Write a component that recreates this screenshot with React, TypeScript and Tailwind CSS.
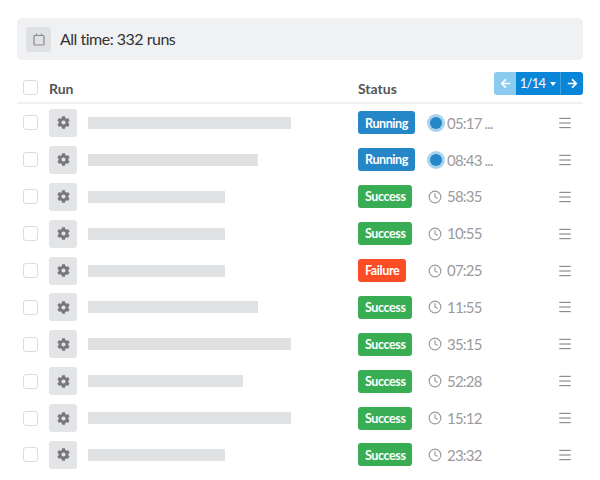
import React from "react";
import { Clock, Menu } from "lucide-react";
import { FaArrowLeft, FaArrowRight, FaCog } from "react-icons/fa";

type RunRow = {
  width: string;
  status: "Running" | "Success" | "Failure";
  time: string;
};

const rows: RunRow[] = [
  { width: "w-[203px]", status: "Running", time: "05:17 ..." },
  { width: "w-[170px]", status: "Running", time: "08:43 ..." },
  { width: "w-[137px]", status: "Success", time: "58:35" },
  { width: "w-[137px]", status: "Success", time: "10:55" },
  { width: "w-[137px]", status: "Failure", time: "07:25" },
  { width: "w-[170px]", status: "Success", time: "11:55" },
  { width: "w-[203px]", status: "Success", time: "35:15" },
  { width: "w-[155px]", status: "Success", time: "52:28" },
  { width: "w-[203px]", status: "Success", time: "15:12" },
  { width: "w-[137px]", status: "Success", time: "23:32" },
];

const badgeColor = {
  Running: "bg-[#2687c8]",
  Success: "bg-[#38ad53]",
  Failure: "bg-[#fa4c25]",
};

const Checkbox = () => (
  <div className="w-[15px] h-[15px] rounded-[3px] border border-[#dcdcdc] bg-white shrink-0" />
);

const Row = ({ row }: { row: RunRow }) => (
  <div className="h-[36.9px] flex items-center">
    <div className="w-[32px] pl-[6px]">
      <Checkbox />
    </div>
    <div className="w-[28px] h-[28px] rounded-[3px] bg-[#e3e4e6] flex items-center justify-center text-[#77787a] shrink-0">
      <FaCog size={13} />
    </div>
    <div className="w-[281px] pl-[10.5px]">
      <div className={`${row.width} h-[12px] bg-[#e0e1e2]`} />
    </div>
    <div className="w-[70px] flex">
      <span className={`${badgeColor[row.status]} flex items-center h-[23px] px-[7px] pt-[2px] rounded-[3px] text-white text-[12.5px] font-bold tracking-[-0.4px]`}>
        {row.status}
      </span>
    </div>
    <div className="w-[131px] flex items-center text-[#9a9b9d] text-[15px] tracking-[-0.8px] gap-[5px]">
      {row.status === "Running" ? (
        <span className="w-[12px] h-[12px] ml-[2px] rounded-full bg-[#2687c8] shadow-[0_0_0_3px_#a9d2ec] shrink-0" />
      ) : (
        <Clock size={14} strokeWidth={2} className="shrink-0" />
      )}
      <span>{row.time}</span>
    </div>
    <Menu size={16} strokeWidth={1.5} className="text-[#77787a] shrink-0 -ml-[2px]" />
  </div>
);

const App: React.FC = () => {
  return (
    <div className="w-[600px] h-[480px] bg-white px-[17px] pt-[18px] font-['Lato',sans-serif] overflow-hidden">
      <div className="h-[42px] bg-[#f0f1f3] rounded-[5px] flex items-center pl-[9px] gap-[9px]">
        <div className="w-[25px] h-[25px] rounded-[3px] bg-[#e0e1e3] flex items-center justify-center text-[#8a8b8d]">
          <svg width="12" height="13" viewBox="0 0 12 13" fill="none" stroke="currentColor" strokeWidth="1.2">
            <rect x="1" y="2.5" width="10" height="9.5" rx="0.5" />
            <path d="M3.5 0.5v2.5M8.5 0.5v2.5" />
          </svg>
        </div>
        <span className="text-[16px] tracking-[-0.5px] text-[#333]">All time: 332 runs</span>
      </div>
      <div className="relative mt-[12px] h-[32px] flex items-end border-b-2 border-[#f0f0f0] pb-[3px]">
        <div className="w-[32px] pl-[6px] self-center pt-[4px]">
          <Checkbox />
        </div>
        <span className="w-[309px] text-[14px] font-bold text-[#555]">Run</span>
        <span className="text-[14px] font-bold text-[#555]">Status</span>
        <div className="absolute right-0 top-0 h-[23px] flex text-white text-[13px] rounded-[3px] overflow-hidden">
          <div className="w-[22px] bg-[#8ccbf0] flex items-center justify-center">
            <FaArrowLeft size={11} />
          </div>
          <div className="w-[44px] bg-[#0a86d8] flex items-center justify-center gap-[5px] tracking-[-0.8px]">
            1/14
            <span className="border-x-[3.5px] border-x-transparent border-t-[4px] border-t-white" />
          </div>
          <div className="w-[23px] border-l border-[#3fa0e0] bg-[#0a86d8] flex items-center justify-center">
            <FaArrowRight size={11} />
          </div>
        </div>
      </div>
      <div className="mt-[0.5px]">
        {rows.map((row, i) => (
          <Row key={i} row={row} />
        ))}
      </div>
    </div>
  );
};

export default App;
